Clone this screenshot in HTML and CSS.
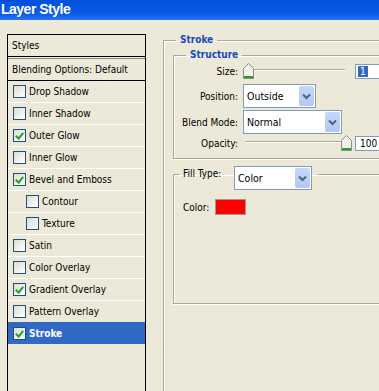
FILE: index.html
```html
<!DOCTYPE html>
<html lang="en">
<head>
  <meta charset="UTF-8" />
  <title>Layer Style</title>
  <link rel="stylesheet" href="styles.css">
</head>
<body>

<div class="titlebar">Layer Style</div>

<div class="dialog">
  <ul class="styles-list">
    <li class="list-head">Styles</li>
    <li class="list-blend">Blending Options: Default</li>
    <li class="style-item"><span class="check"></span>Drop Shadow</li>
    <li class="style-item"><span class="check"></span>Inner Shadow</li>
    <li class="style-item"><span class="check on"></span>Outer Glow</li>
    <li class="style-item"><span class="check"></span>Inner Glow</li>
    <li class="style-item"><span class="check on"></span>Bevel and Emboss</li>
    <li class="style-item sub"><span class="check"></span>Contour</li>
    <li class="style-item sub"><span class="check"></span>Texture</li>
    <li class="style-item"><span class="check"></span>Satin</li>
    <li class="style-item"><span class="check"></span>Color Overlay</li>
    <li class="style-item"><span class="check on"></span>Gradient Overlay</li>
    <li class="style-item"><span class="check"></span>Pattern Overlay</li>
    <li class="style-item selected"><span class="check on"></span>Stroke</li>
  </ul>

  <div class="settings">
    <fieldset class="group group-stroke">
      <legend class="group-title">Stroke</legend>

      <fieldset class="group group-structure">
        <legend class="group-title">Structure</legend>

        <div class="field field-size">
          <label>Size:</label>
          <div class="slider">
            <svg class="thumb thumb-left" width="11" height="16" viewBox="0 0 11 16">
              <path d="M0.5 5.5 L5.5 0.5 L10.5 5.5 L10.5 15.5 L0.5 15.5 Z" fill="#f4f3ee" stroke="#8c8c84"/>
              <rect x="1" y="13" width="9" height="2" fill="#21a121"/>
            </svg>
          </div>
          <div class="textbox"><span class="sel">1</span></div>
        </div>

        <div class="field field-position">
          <label>Position:</label>
          <div class="select select-position">Outside<span class="drop"><svg width="9" height="7" viewBox="0 0 9 7"><path d="M1 1.5 L4.5 5 L8 1.5" fill="none" stroke="#4d6185" stroke-width="2"/></svg></span></div>
        </div>

        <div class="field field-blend">
          <label>Blend Mode:</label>
          <div class="select select-blend">Normal<span class="drop"><svg width="9" height="7" viewBox="0 0 9 7"><path d="M1 1.5 L4.5 5 L8 1.5" fill="none" stroke="#4d6185" stroke-width="2"/></svg></span></div>
        </div>

        <div class="field field-opacity">
          <label>Opacity:</label>
          <div class="slider slider-opacity">
            <svg class="thumb thumb-right" width="11" height="16" viewBox="0 0 11 16">
              <path d="M0.5 5.5 L5.5 0.5 L10.5 5.5 L10.5 15.5 L0.5 15.5 Z" fill="#f4f3ee" stroke="#8c8c84"/>
              <rect x="1" y="13" width="9" height="2" fill="#21a121"/>
            </svg>
          </div>
          <div class="textbox">100</div>
        </div>
      </fieldset>

      <fieldset class="group group-fill">
        <legend class="fill-legend">
          <span class="fill-label">Fill Type:</span>
          <div class="select select-fill">Color<span class="drop"><svg width="9" height="7" viewBox="0 0 9 7"><path d="M1 1.5 L4.5 5 L8 1.5" fill="none" stroke="#4d6185" stroke-width="2"/></svg></span></div>
        </legend>

        <div class="color-field">
          <label>Color:</label>
          <span class="swatch"></span>
        </div>
      </fieldset>
    </fieldset>
  </div>
</div>

</body>
</html>
```

FILE: styles.css
```css
body {
  margin: 0;
  width: 379px;
  height: 391px;
  overflow: hidden;
  background: #ece9d8;
  font-family: "DejaVu Sans Condensed", "DejaVu Sans", sans-serif;
  font-stretch: condensed;
  font-size: 10px;
  color: #000;
}

.titlebar {
  height: 20px;
  padding-left: 1px;
  background: linear-gradient(#0050dc, #0a5ce6 70%, #2a74ee);
  color: #fff;
  font-family: "Liberation Sans", sans-serif;
  font-stretch: normal;
  font-weight: bold;
  font-size: 14px;
  letter-spacing: -0.5px;
  line-height: 18px;
}

.dialog {
  display: flex;
  padding-top: 14px;
}

/* left column: list of effects */
.styles-list {
  list-style: none;
  margin: 0 0 0 7px;
  padding: 0;
  width: 137px;
  height: 357px;
  border: 1px solid #000;
  border-bottom: none;
  flex: none;
}

.styles-list li {
  height: 21px;
  line-height: 21px;
  display: flex;
  align-items: center;
  white-space: nowrap;
}

.list-head {
  padding-left: 4px;
  border-bottom: 1px solid #000;
}

.list-blend {
  padding-left: 4px;
  border-top: 1px solid #888;
  margin-top: 1px;
  border-bottom: 1px solid #000;
}

.style-item {
  padding-left: 5px;
  border-bottom: 1px solid #fff;
}

.style-item.sub {
  padding-left: 18px;
}

.style-item.selected {
  background: #316ac5;
  color: #fff;
  font-weight: bold;
  height: 22px;
  margin-top: -1px;
  border-bottom: none;
}

.check {
  width: 11px;
  height: 11px;
  border: 1px solid #1c5180;
  background: linear-gradient(135deg, #dcdcd4, #fff);
  margin-right: 3px;
  position: relative;
  flex: none;
}

.check.on::after {
  content: "";
  position: absolute;
  left: 3px;
  top: 1px;
  width: 3px;
  height: 6px;
  border: solid #21a121;
  border-width: 0 2px 2px 0;
  transform: rotate(40deg);
}

/* right side: the panel runs on past the window edge */
.settings {
  flex: none;
  width: 216px;
  height: 357px;
  overflow: hidden;
  margin-left: 17px;
  margin-top: 0;
}

.group {
  margin: 0;
  padding: 0;
  border: 1px solid #aca899;
  border-right: none;
  box-shadow: inset 1px 1px 0 #fff, 0 1px 0 #fff;
  min-inline-size: 0;
}

.group-title {
  margin-left: 12px;
  padding: 0 4px;
  line-height: 12px;
  color: #1848b8;
  font-weight: bold;
}

.group-stroke {
  height: 380px;
  border-bottom: none;
}

.group-structure {
  margin-left: 9px;
  margin-top: 3px;
  padding: 2px 0 7px 0;
}

.field {
  display: flex;
  align-items: center;
}

.field label {
  flex: none;
  width: 64px;
  margin-right: 5px;
  text-align: right;
}

.field-position {
  margin-top: 5px;
}

.field-blend {
  margin-top: 2px;
}

.field-opacity {
  margin-top: 1px;
}

.slider {
  flex: none;
  width: 102px;
  height: 16px;
  position: relative;
  background: linear-gradient(transparent 6px, #aca899 6px, #aca899 7px, #fff 7px, #fff 8px, transparent 8px);
}

.slider-opacity {
  margin-left: 3px;
  width: 99px;
}

.thumb {
  position: absolute;
  top: 0;
}

.thumb-left {
  left: 0;
}

.thumb-right {
  right: -7px;
}

.textbox {
  flex: none;
  margin-left: 10px;
  width: 40px;
  height: 13px;
  border: 1px solid #7f9db9;
  background: #fff;
  line-height: 13px;
  padding-left: 4px;
}

.field-size .textbox {
  padding-left: 2px;
}

.sel {
  background: #316ac5;
  color: #fff;
  padding: 0 2px;
}

.select {
  flex: none;
  position: relative;
  height: 22px;
  border: 1px solid #7f9db9;
  background: #fff;
  line-height: 22px;
  padding-left: 3px;
  font-size: 10.5px;
  box-sizing: content-box;
}

.select-position {
  width: 68px;
}

.select-blend {
  width: 94px;
}

.select-fill {
  width: 73px;
  margin-left: 6px;
  margin-bottom: -8px;
}

.drop {
  position: absolute;
  right: 1px;
  top: 1px;
  width: 15px;
  height: 20px;
  border-radius: 2px;
  background: linear-gradient(#c8d6fa, #b4c7f3);
  display: flex;
  align-items: center;
  justify-content: center;
}

.group-fill {
  margin-left: 9px;
  margin-top: 7px;
  padding: 17px 0 88px 0;
}

.fill-legend {
  margin-left: 6px;
  padding: 0 6px 0 3px;
  display: flex;
  align-items: flex-start;
  height: 16px;
}

.fill-label {
  width: 45px;
  line-height: 16px;
}

.color-field {
  display: flex;
  align-items: center;
  height: 16px;
  padding-left: 9px;
}

.color-field label {
  width: 32px;
}

.swatch {
  width: 29px;
  height: 14px;
  border: 1px solid #9a9a90;
  background: #ff0000;
}
```
